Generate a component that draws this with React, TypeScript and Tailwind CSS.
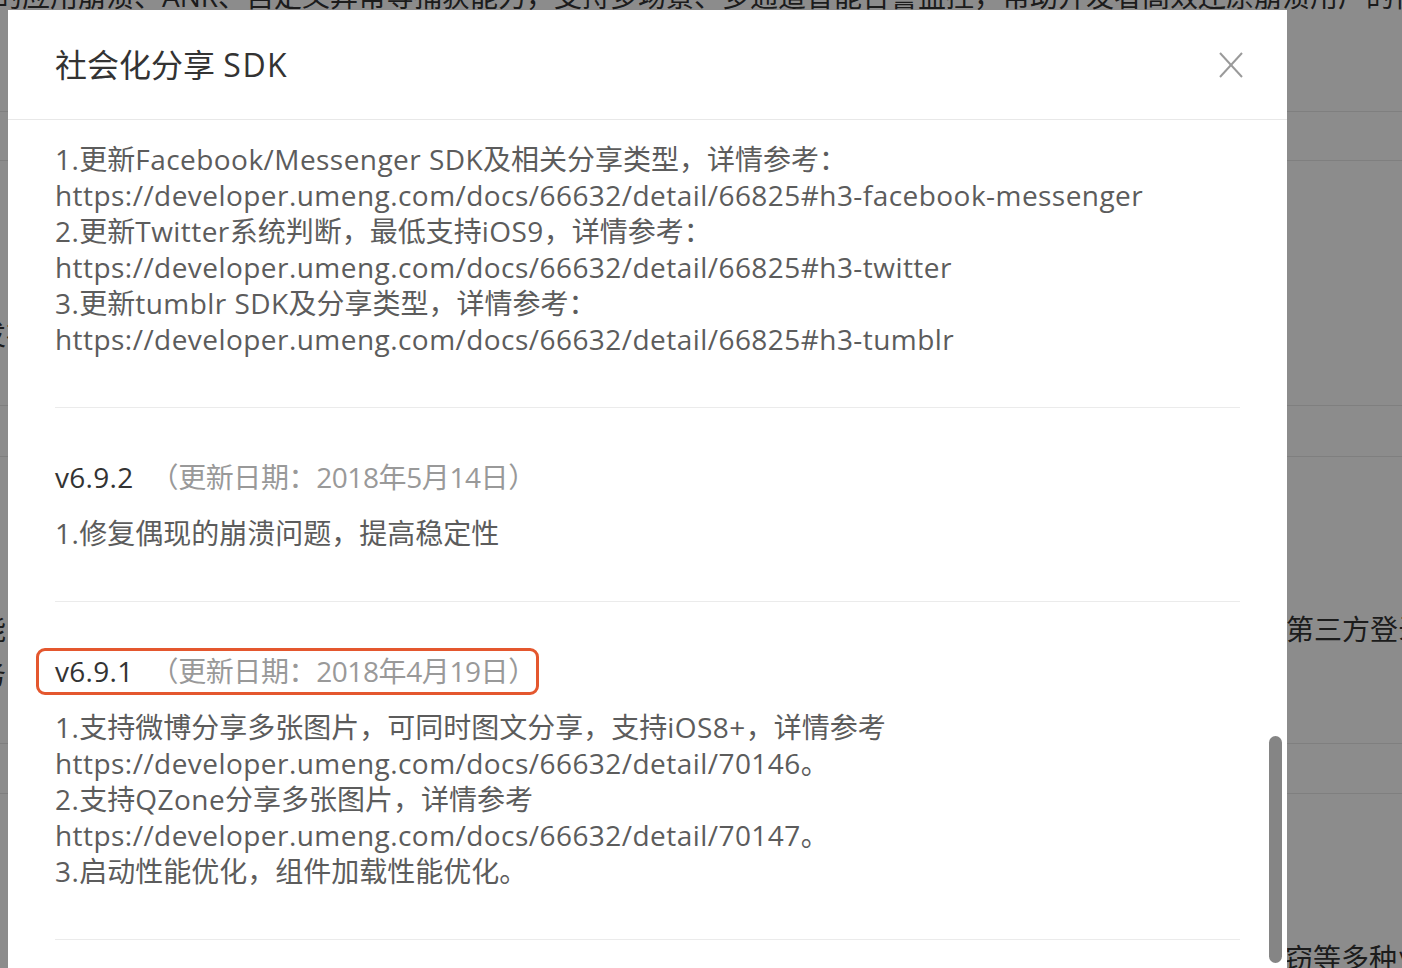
const FONT = "font-['Open_Sans','Noto_Sans_CJK_SC',sans-serif]";

interface Release {
  version?: string;
  date?: string;
  lines: string[];
  highlight?: boolean;
}

const releases: Release[] = [
  {
    lines: [
      '1.更新Facebook/Messenger SDK及相关分享类型，详情参考：',
      'https://developer.umeng.com/docs/66632/detail/66825#h3-facebook-messenger',
      '2.更新Twitter系统判断，最低支持iOS9，详情参考：',
      'https://developer.umeng.com/docs/66632/detail/66825#h3-twitter',
      '3.更新tumblr SDK及分享类型，详情参考：',
      'https://developer.umeng.com/docs/66632/detail/66825#h3-tumblr',
    ],
  },
  {
    version: 'v6.9.2',
    date: '（更新日期：2018年5月14日）',
    lines: ['1.修复偶现的崩溃问题，提高稳定性'],
  },
  {
    version: 'v6.9.1',
    date: '（更新日期：2018年4月19日）',
    highlight: true,
    lines: [
      '1.支持微博分享多张图片，可同时图文分享，支持iOS8+，详情参考',
      'https://developer.umeng.com/docs/66632/detail/70146。',
      '2.支持QZone分享多张图片，详情参考',
      'https://developer.umeng.com/docs/66632/detail/70147。',
      '3.启动性能优化，组件加载性能优化。',
    ],
  },
];

// latin runs get a touch of tracking so they sit as wide as the original font
const MixedText = ({ text }: { text: string }) => (
  <>
    {text.split(/([\u3000-\u9fff\uff00-\uffef]+)/).map((part, i) =>
      /[\u3000-\u9fff\uff00-\uffef]/.test(part) ? (
        <span key={i}>{part}</span>
      ) : (
        <span key={i} className="tracking-[0.45px]">
          {part}
        </span>
      ),
    )}
  </>
);

// page behind the dimmed mask
const BackgroundPage = () => (
  <div className="flex flex-col bg-white text-[28px] leading-[36px] text-[#333]">
    <div className="mt-[-22px] h-[134px] whitespace-nowrap border-b border-[#e8e8e8]">
      <p className="ml-[-6px]">
        的应用崩溃、ANR、自定义异常等捕获能力，支持多场景、多通道智能告警监控，帮助开发者高效还原崩溃用户的使用场景
      </p>
    </div>
    <div className="h-[49px] border-b border-[#e8e8e8]" />
    <div className="h-[245px] border-b border-[#e8e8e8] pt-[155px]">
      <p className="ml-[-22px] whitespace-nowrap">发布</p>
    </div>
    <div className="h-[51px] border-b border-[#e8e8e8]" />
    <div className="h-[287px] whitespace-nowrap border-b border-[#e8e8e8] pt-[154px]">
      <p className="flex">
        <span className="ml-[-22px]">能</span>
        <span className="ml-[1280px]">第三方登录与分享</span>
      </p>
      <p className="ml-[-22px] mt-[9px]">务</p>
    </div>
    <div className="h-[50px] border-b border-[#e8e8e8]" />
    <div className="h-[200px] whitespace-nowrap pl-[1285px] pt-[146px]">
      <p>窃等多种业务场景</p>
    </div>
  </div>
);

const CloseIcon = () => (
  <svg width="26" height="28" viewBox="0 0 26 28" fill="none" stroke="#9a9a9a" strokeWidth="2">
    <line x1="2" y1="2" x2="24" y2="26" />
    <line x1="24" y1="2" x2="2" y2="26" />
  </svg>
);

const ReleaseBlock = ({ release, first }: { release: Release; first: boolean }) => (
  <div className={`border-b border-[#ebebeb] pb-[50px] ${first ? 'pt-[21px]' : 'pt-[51px]'}`}>
    {release.version && (
      <div className="relative mb-[20px] flex h-[36px] items-center whitespace-nowrap">
        <span className="tracking-[0.3px] text-[#333]">{release.version}</span>
        <span className="ml-[17px] tracking-[-0.4px] text-[#999]">{release.date}</span>
        {release.highlight && (
          <div className="absolute left-[-19px] top-[-5px] h-[47px] w-[503px] rounded-[9px] border-[3px] border-[#e4572e]" />
        )}
      </div>
    )}
    <div className="text-[#5c5c5c]">
      {release.lines.map((line) => (
        <p key={line} className="whitespace-nowrap">
          <MixedText text={line} />
        </p>
      ))}
    </div>
  </div>
);

export default function App() {
  return (
    <div className={`relative h-[968px] w-[1402px] overflow-hidden ${FONT}`}>
      <BackgroundPage />
      {/* mask */}
      <div className="absolute inset-0 bg-black/45" />

      {/* modal */}
      <div className="absolute left-[8px] top-[10px] h-[1100px] w-[1279px] bg-white">
        <div className="flex h-[110px] items-center justify-between border-b border-[#e8e8e8] pl-[47px] pr-[34px]">
          <h2 className="text-[32px] text-[#333]">
            社会化分享 <span className="tracking-[1.5px]">SDK</span>
          </h2>
          <button className="flex h-[44px] w-[44px] items-center justify-center">
            <CloseIcon />
          </button>
        </div>
        <div className="px-[47px] text-[28px] leading-[36px]">
          {releases.map((r, i) => (
            <ReleaseBlock key={i} release={r} first={i === 0} />
          ))}
        </div>
        {/* overlay scrollbar */}
        <div className="absolute left-[1261px] top-[726px] h-[227px] w-[13px] rounded-full bg-[#858585]" />
      </div>
    </div>
  );
}
